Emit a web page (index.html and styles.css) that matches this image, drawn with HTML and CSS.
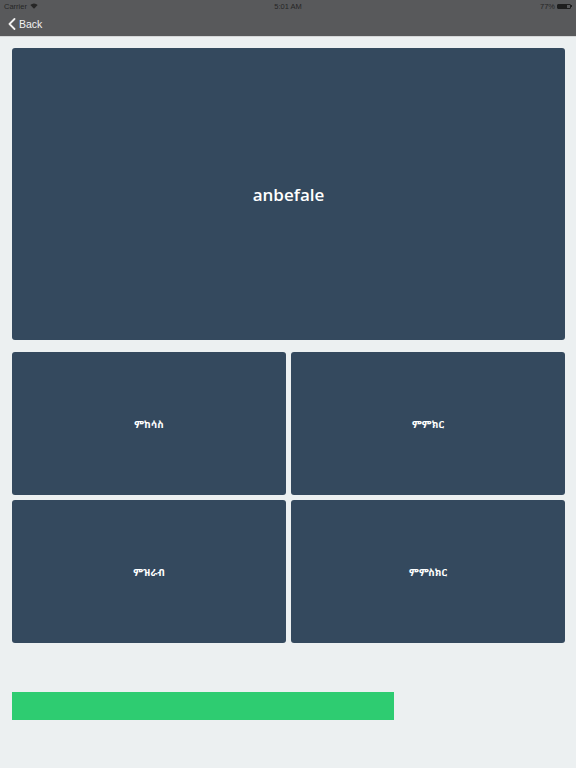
FILE: index.html
```html
<!DOCTYPE html>
<html lang="en">
<head>
<meta charset="utf-8">
<title>anbefale</title>
<link rel="stylesheet" href="styles.css">
</head>
<body>
<header class="topbar">
  <div class="status">
    <div class="status-left">Carrier
      <svg class="wifi" width="8" height="6" viewBox="0 0 8 6"><path d="M0.3 2.1 A5.2 5.2 0 0 1 7.7 2.1 L4 5.8 Z" fill="#262626"/></svg>
    </div>
    <div class="status-mid">5:01 AM</div>
    <div class="status-right">77%
      <span class="battery"><span class="battery-fill"></span></span><span class="battery-tip"></span>
    </div>
  </div>
  <div class="nav">
    <svg class="chevron" width="8" height="12" viewBox="0 0 8 12"><path d="M6.5 1 L1.5 6 L6.5 11" fill="none" stroke="#f2f2f2" stroke-width="1.8" stroke-linecap="round" stroke-linejoin="round"/></svg>
    <span class="back">Back</span>
  </div>
</header>
<main class="content">
  <div class="card hero">anbefale</div>
  <div class="grid">
    <div class="card tile">ምከሳስ</div>
    <div class="card tile">ምምክር</div>
    <div class="card tile">ምዝራብ</div>
    <div class="card tile">ምምስክር</div>
  </div>
  <div class="progress"></div>
</main>
</body>
</html>
```
FILE: styles.css
```css
* { box-sizing: border-box; }
html, body { margin: 0; padding: 0; }
body {
  width: 576px;
  height: 768px;
  background: #ecf0f1;
  font-family: "Liberation Sans", Arial, "Noto Sans", sans-serif;
  overflow: hidden;
}
.topbar {
  height: 37px;
  background: #58595b;
  border-bottom: 1px solid #d4d6d7;
}
.status {
  height: 12px;
  display: flex;
  justify-content: space-between;
  align-items: center;
  padding: 0 4px;
  font-size: 7.5px;
  color: #262626;
}
.status-left, .status-mid, .status-right {
  display: flex;
  align-items: center;
  gap: 3px;
  flex: 1;
}
.status-mid { justify-content: center; }
.status-right { justify-content: flex-end; gap: 2px; }
.battery {
  width: 14px;
  height: 5px;
  border: 1px solid #1e1e1e;
  border-radius: 1px;
  display: flex;
}
.battery-fill { width: 77%; background: #1e1e1e; }
.battery-tip { width: 1px; height: 2px; background: #1e1e1e; margin-left: -2px; }
.nav {
  height: 24px;
  display: flex;
  align-items: center;
  padding-left: 8px;
  gap: 3px;
}
.back {
  color: #f2f2f2;
  font-size: 10.5px;
}
.content {
  padding: 11px 11px 0 12px;
  display: flex;
  flex-direction: column;
}
.card {
  background: #34495e;
  color: #ffffff;
  border-radius: 3px;
  display: flex;
  align-items: center;
  justify-content: center;
}
.hero {
  height: 292px;
  font-size: 17px;
  font-weight: 600;
  font-family: "Open Sans", "Liberation Sans", sans-serif;
}
.grid {
  margin-top: 12px;
  display: grid;
  grid-template-columns: 1fr 1fr;
  grid-auto-rows: 143px;
  gap: 5px;
}
.tile {
  font-size: 10px;
  font-weight: bold;
  font-family: "Noto Sans Ethiopic", "Abyssinica SIL", "Noto Sans", sans-serif;
}
.progress {
  margin-top: 49px;
  width: 382px;
  height: 28px;
  background: #2ecc71;
}
```
